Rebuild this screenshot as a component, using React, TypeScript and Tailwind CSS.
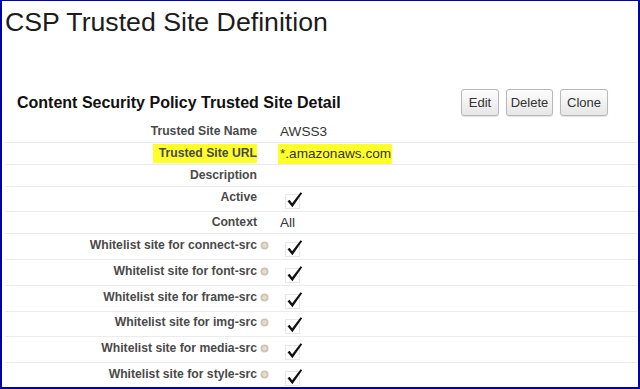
import React from "react";

interface Row {
  label: string;
  value?: string;
  check?: boolean;
  help?: boolean;
  highlight?: boolean;
  tall?: string;
}

const rows: Row[] = [
  { label: "Trusted Site Name", value: "AWSS3" },
  { label: "Trusted Site URL", value: "*.amazonaws.com", highlight: true },
  { label: "Description", value: "" },
  { label: "Active", check: true, tall: "h-[25px]" },
  { label: "Context", value: "All" },
  { label: "Whitelist site for connect-src", check: true, help: true, tall: "h-[26px]" },
  { label: "Whitelist site for font-src", check: true, help: true, tall: "h-[26px]" },
  { label: "Whitelist site for frame-src", check: true, help: true, tall: "h-[26px]" },
  { label: "Whitelist site for img-src", check: true, help: true, tall: "h-[25px]" },
  { label: "Whitelist site for media-src", check: true, help: true, tall: "h-[26px]" },
  { label: "Whitelist site for style-src", check: true, help: true, tall: "h-[26px]" },
];

const HelpIcon = () => (
  <svg width="9" height="9" viewBox="0 0 9 9" className="ml-[3px] -mr-[12px]">
    <circle cx="4.5" cy="4.5" r="4" fill="#cdc4b3" />
    <circle cx="4.5" cy="4.5" r="2.2" fill="#e4ddd0" />
  </svg>
);

const CheckMark = () => (
  <svg width="19" height="18" viewBox="0 0 19 18" className="ml-[5px] mt-[2px]">
    <rect
      x="0.5"
      y="3.5"
      width="14"
      height="14"
      fill="none"
      stroke="#cfcfcf"
      strokeDasharray="1 1"
    />
    <path d="M2.5 10.2 L4.6 8.8 L7.1 12.2 L15.6 1.2 L17.2 2.3 L7.4 16.2 Z" fill="#111" />
  </svg>
);

const Button = ({ text, w }: { text: string; w: string }) => (
  <button
    className={`${w} h-[27px] rounded-[3px] border border-[#b8b8b8] bg-gradient-to-b from-[#fdfdfd] to-[#e6e6e6] text-[13px] text-[#333] shadow-[0_1px_1px_rgba(0,0,0,0.12)]`}
  >
    {text}
  </button>
);

export default function App() {
  return (
    <div
      className="w-[640px] h-[389px] overflow-hidden bg-white border-t border-l-2 border-r-2 border-b-2 border-[#0000a8]"
      style={{ fontFamily: '"Liberation Sans", Arial, sans-serif' }}
    >
      <div className="pl-[3px] pt-[6px] text-[26.7px] leading-[30px] text-[#1c1c1c]">
        CSP Trusted Site Definition
      </div>

      <div className="mt-[52px] flex h-[27px] items-start">
        <div className="pl-[15px] pt-[4px] text-[16px] font-bold leading-[20px] text-[#111] w-[457px]">
          Content Security Policy Trusted Site Detail
        </div>
        <div className="ml-[2px] flex gap-[7px]">
          <Button text="Edit" w="w-[38px]" />
          <Button text="Delete" w="w-[47px]" />
          <Button text="Clone" w="w-[48px]" />
        </div>
      </div>

      <div className="mt-[5px] ml-[3px] mr-[1px]">
        {rows.map((r) => (
          <div
            key={r.label}
            className={`flex items-center border-b border-[#ebebeb] ${r.tall ?? "h-[22px]"}`}
          >
            <div className="flex w-[252px] justify-end">
              <span
                className={`text-[12.2px] font-bold text-[#4a4a4a] leading-[19px] ${
                  r.highlight ? "bg-[#ffff2a] pl-[6px]" : ""
                } ${r.check ? "-mt-[3px]" : ""}`}
              >
                {r.label}
              </span>
              {r.help && (
                <span className="flex items-center -mt-[3px]">
                  <HelpIcon />
                </span>
              )}
            </div>
            <div className="pl-[23px] flex items-center">
              {r.check ? (
                <CheckMark />
              ) : (
                <span
                  className={`text-[13.6px] text-[#333] leading-[20px] ${
                    r.highlight ? "bg-[#ffff2a] -ml-[2px] pl-[2px] pr-[1px]" : ""
                  }`}
                >
                  {r.value}
                </span>
              )}
            </div>
          </div>
        ))}
      </div>
    </div>
  );
}
